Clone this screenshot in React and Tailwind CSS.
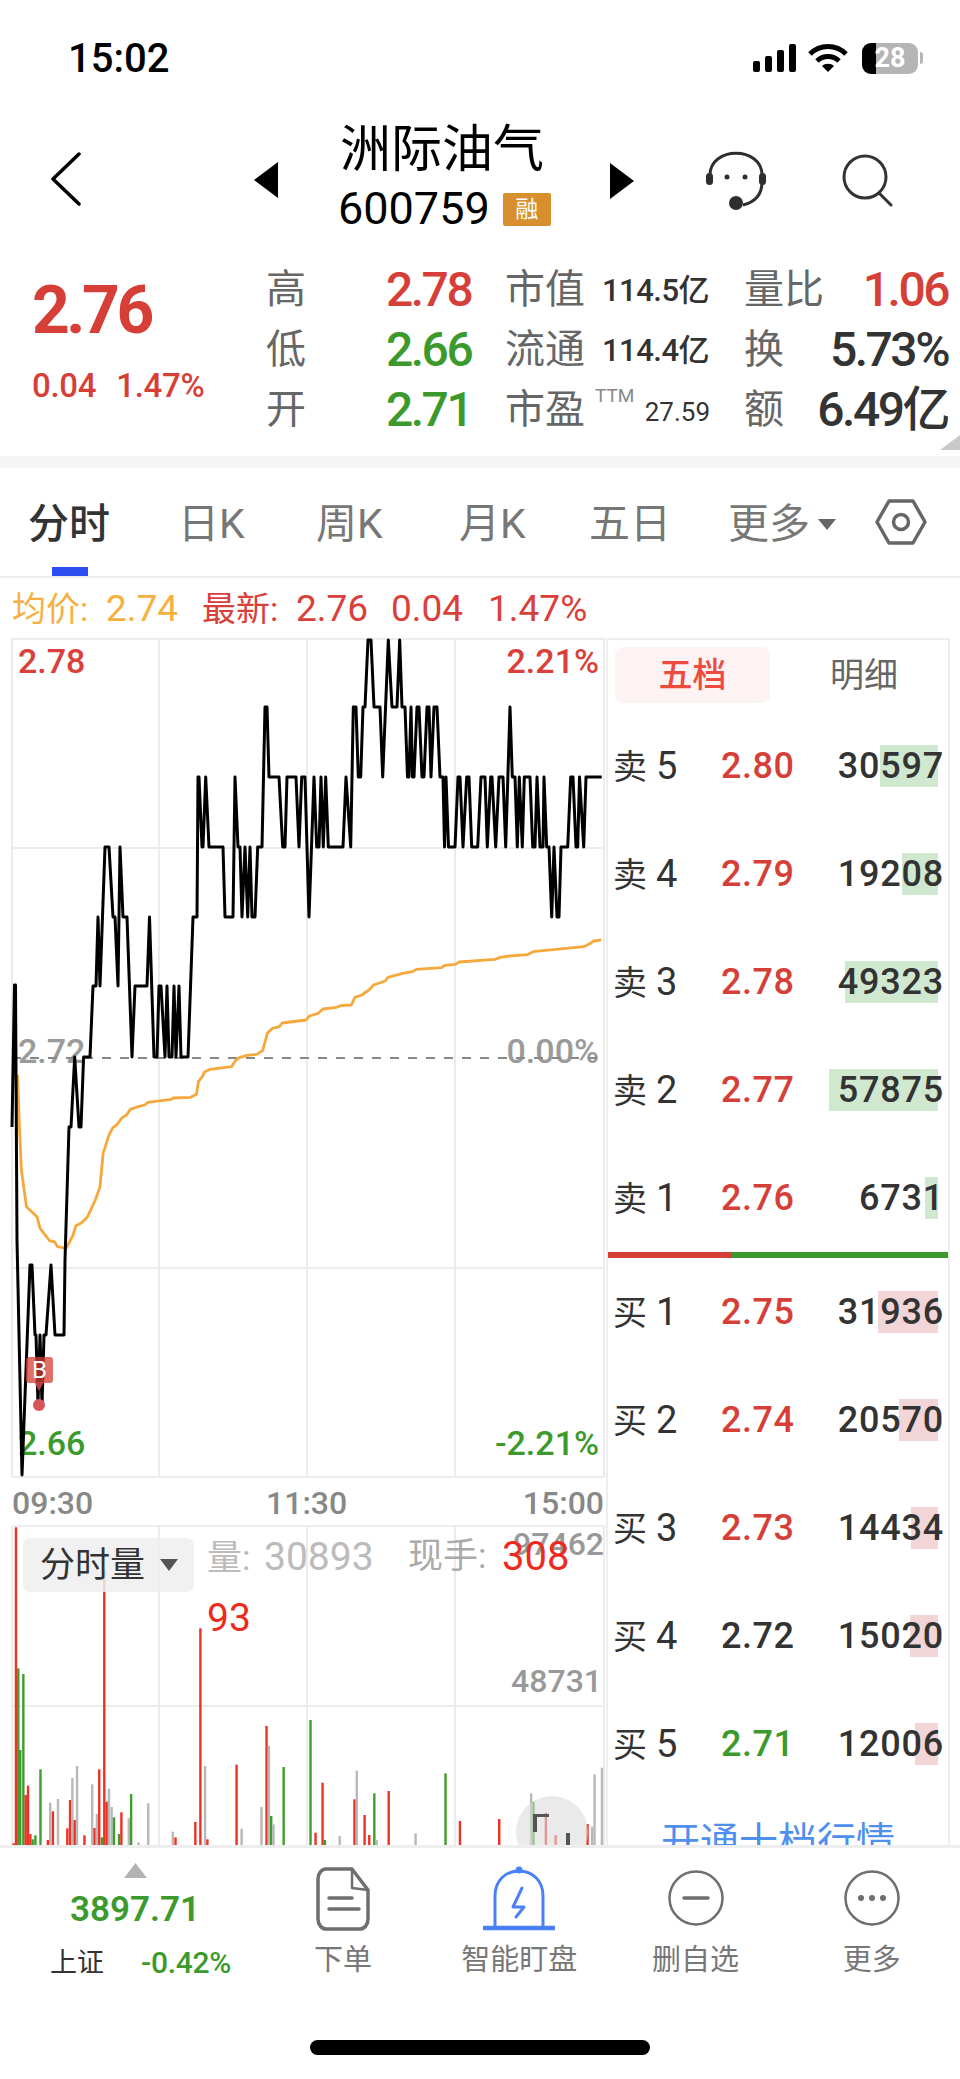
const RED = '#d63f38';
const GREEN = '#3c9a2d';

// price line, page coordinates
const pricePts = [
  [12,1127],[14.5,985],[15.5,985],[17,1240],[22,1475],[30,1265],[32,1265],[35,1335],[36,1335],[38,1405],[40,1335],[42,1405],[44,1335],[46,1335],[51,1265],[55,1335],[64,1335],
  [65,1260],[69,1127],[71,1127],[74.7,1057],[79,1127],[81,1127],[83.6,1057],[90,1057],[93,986],[96,986],[98,917],[100,986],[105,847],[109,847],[113,917],[115,917],[118,986],[120,847],[123,917],[127,917],[132,1057],[135,986],[147,986],[149.5,917],[154,1057],[157,1057],[159,986],[161,986],[165,1057],[167,986],[169,1057],[172,1057],[174,986],[176,1057],[179,986],[181,1057],[188,1057],[193,917],[197,917],
  [198,777],[199,777],[202,847],[203,847],[205.7,777],[209,847],[223,847],[225,917],[233,917],[235,777],[238,847],[240,847],[242,917],[245,847],[247.7,917],[250,847],[252,917],[255,917],[257.7,847],[262,847],[265,707],[267,707],[269,777],[279,777],[282.7,847],[285,847],[287,777],[296,777],[299,847],[301.7,777],[305,777],[309,917],[314,777],[316.7,847],[319,847],[321,777],[323.3,847],[325.7,777],[328.3,847],[343,847],[346,777],[350.7,847],[353.3,707],[356,707],[358.3,777],[360.7,777],[363,707],[365,707],[368,640],[371,640],[374,707],[380,707],[382.7,777],[388.3,640],[392,707],[397,707],
  [399.7,640],[402,707],[405,707],[407.5,777],[409,777],[411,707],[412.5,777],[414,777],[417,707],[419,707],[422,777],[424,777],[427,707],[429,707],[431,777],[434,707],[437,707],[440,777],[443,777],[444.5,847],[446,777],[448.5,847],[455,847],[458,777],[460,777],[463,847],[466.7,777],[469,777],[471.7,847],[477.7,847],[481,777],[485,777],[487.3,847],[490.7,777],[492,777],[495.7,847],[499,777],[503,777],[505.7,847],[510,707],[512.3,777],[515,777],[517.3,847],[519.3,777],[522.3,847],[524.3,777],[530,777],[532.7,847],[535,847],[537,777],[540,847],[543,847],[544,777],[546.7,847],[549,847],[551.7,917],[554,847],[557,917],[559,917],[561,847],[567.7,847],[570.7,777],[573,777],[576,847],[577.7,847],[579.5,777],[583.7,847],[586,777],[601.7,777],
];

// average line and volume bars were read off a crop: x / 2.57, 860 + y / 3
const avgPts = [
  [45,645],[50,800],[55,930],[68,1040],[95,1070],[103,1105],[128,1143],[140,1145],[148,1160],[170,1165],[188,1125],[195,1097],[210,1088],[225,1070],[245,1020],[257,980],[265,880],[280,825],[290,803],[300,795],[312,775],[325,765],[335,748],[355,740],[372,735],[380,727],[440,718],[445,714],[490,712],[505,703],[510,665],[520,650],[525,637],[540,628],[595,620],[605,602],[615,593],[635,586],[660,583],[675,572],[687,520],[700,505],[718,500],[725,489],[787,480],[795,468],[818,460],[830,447],[865,442],[875,437],[903,435],[912,412],[930,405],[950,388],[960,375],[990,363],[997,352],[1035,340],[1060,335],[1070,328],[1135,323],[1143,316],[1170,313],[1180,306],[1272,298],[1285,292],[1310,288],[1355,284],[1370,275],[1500,260],[1518,250],[1525,243],[1545,240],
];

const volBars = [
  ['r',35,1030],['r',41,82],['g',47,505],['g',52,750],['g',60,522],['r',66,885],['r',72,857],['r',78,1002],['g',84,1018],['g',91,1006],['g',104,808],['r',123,1020],['n',129,908],['r',136,934],['n',149,897],['r',173,985],['r',180,900],['n',186,834],['r',192,960],['n',198,798],['r',217,1006],['n',237,853],['r',243,984],['n',249,942],['r',255,808],['g',262,1012],['n',280,866],['n',287,921],['r',274,905],['r',268,208],['g',293,952],['g',306,1002],['r',312,937],['n',331,955],['g',337,882],['n',356,1027],['n',381,910],['n',444,995],['r',451,1012],['r',502,966],['r',515,385],['n',527,798],['r',533,1018],['r',608,794],['n',621,986],['n',672,921],['r',685,678],['n',691,738],['g',697,948],['n',703,973],['g',729,801],['g',798,660],['r',811,998],['r',829,848],['g',835,1020],['n',873,1008],['r',911,898],['n',917,812],['r',937,945],['r',949,1005],['g',962,880],['n',968,1020],['r',999,873],['n',1068,1000],['g',1145,820],['r',1182,963],['r',1283,957],['n',1365,880],['g',1371,905],['r',1403,938],['r',1428,1005],['r',1510,972],['n',1522,980],['n',1528,823],['n',1547,803],
];
const barColor = { r: '#ee3124', g: '#3f9c2e', n: '#b8b8b8' };

const gridX = [12, 159, 307, 455, 604];

const sells = [
  ['5', '2.80', '30597', 880, RED],
  ['4', '2.79', '19208', 902, RED],
  ['3', '2.78', '49323', 845, RED],
  ['2', '2.77', '57875', 829, RED],
  ['1', '2.76', '6731', 925, RED],
];
const buys = [
  ['1', '2.75', '31936', 878, RED],
  ['2', '2.74', '20570', 899, RED],
  ['3', '2.73', '14434', 911, RED],
  ['4', '2.72', '15020', 910, '#333333'],
  ['5', '2.71', '12006', 915, GREEN],
];

const toLine = (pts) => pts.map((p) => p.join(',')).join(' ');

const StatusBar = () => (
  <div className="flex h-[90px] items-start">
    <div className="ml-[68px] mt-[38px] w-[110px] text-[40px] font-medium leading-[42px] text-black">15:02</div>
    <svg className="ml-[574px] mt-[43px]" width="46" height="30" viewBox="0 0 46 30" fill="#000">
      <rect x="1" y="18" width="7" height="11" rx="2" />
      <rect x="13" y="13" width="7" height="16" rx="2" />
      <rect x="25" y="7" width="7" height="22" rx="2" />
      <rect x="37" y="1" width="7" height="28" rx="2" />
    </svg>
    <svg className="ml-[9px] mt-[42px]" width="42" height="32" viewBox="0 0 42 32" fill="none" stroke="#000" strokeWidth="5">
      <path d="M3 12C13 2 29 2 39 12" />
      <path d="M10 19C16 13 26 13 32 19" />
      <path d="M21 30L15 24C18 21 24 21 27 24Z" fill="#000" stroke="none" />
    </svg>
    <div className="relative ml-[13px] mt-[43px] flex h-[31px] w-[56px] items-center justify-center overflow-hidden rounded-[9px] bg-[#b5b5b5]">
      <div className="absolute inset-y-0 left-0 w-[14px] bg-black" />
      <span className="relative text-[27px] font-bold leading-none text-white">28</span>
    </div>
    <div className="ml-[2px] mt-[52px] h-[12px] w-[3px] rounded-r-full bg-[#b5b5b5]" />
  </div>
);

const Header = () => (
  <div className="flex h-[170px] items-start">
    <svg className="ml-[50px] mt-[62px]" width="32" height="54" viewBox="0 0 32 54" fill="none" stroke="#000" strokeWidth="3.5" strokeLinecap="round" strokeLinejoin="round">
      <path d="M29 2L3 27L29 52" />
    </svg>
    <svg className="ml-[172px] mt-[72px]" width="24" height="36" viewBox="0 0 24 36" fill="#000">
      <path d="M24 0V36L0 18Z" />
    </svg>
    <div className="ml-[60px] w-[216px]">
      <div className="ml-[2px] mt-[31px] text-[51px] leading-[58px] text-black">洲际油气</div>
      <div className="mt-[7px] flex items-center">
        <span className="text-[45px] leading-[46px] text-black">600759</span>
        <span className="ml-[13px] flex h-[33px] w-[48px] items-center justify-center rounded-[2px] bg-[#d8902e] text-[23px] leading-none text-white">融</span>
      </div>
    </div>
    <svg className="ml-[56px] mt-[73px]" width="24" height="36" viewBox="0 0 24 36" fill="#000">
      <path d="M0 0V36L24 18Z" />
    </svg>
    <svg className="ml-[71px] mt-[60px]" width="62" height="60" viewBox="0 0 62 60" fill="none" stroke="#2e2e2e" strokeWidth="3">
      <path d="M5 25C5 -4 57 -4 57 25" />
      <path d="M57 32C57 44 50 52 38 55" />
      <rect x="1" y="23" width="7" height="12" rx="3.5" fill="#2e2e2e" stroke="none" />
      <rect x="54" y="23" width="7" height="12" rx="3.5" fill="#2e2e2e" stroke="none" />
      <circle cx="22" cy="27" r="2.5" fill="#2e2e2e" stroke="none" />
      <circle cx="40" cy="27" r="2.5" fill="#2e2e2e" stroke="none" />
      <circle cx="31" cy="53" r="7" fill="#2e2e2e" stroke="none" />
    </svg>
    <svg className="ml-[75px] mt-[63px]" width="52" height="54" viewBox="0 0 52 54" fill="none" stroke="#333" strokeWidth="3" strokeLinecap="round">
      <circle cx="23" cy="24" r="21" />
      <path d="M38 41L49 52" />
    </svg>
  </div>
);

const quoteRows = [
  { k1: '高', v1: '2.78', c1: RED, k2: '市值', v2: '114.5亿', k3: '量比', v3: '1.06', c3: RED },
  { k1: '低', v1: '2.66', c1: GREEN, k2: '流通', v2: '114.4亿', k3: '换', v3: '5.73%', c3: '#333333' },
  { k1: '开', v1: '2.71', c1: GREEN, k2: '市盈', v2: '27.59', ttm: true, k3: '额', v3: '6.49亿', c3: '#333333' },
];

const Quote = () => (
  <div className="relative flex h-[196px] items-start">
    <div className="w-[266px] pl-[32px]">
      <div className="mt-[15px] text-[66px] font-bold leading-[72px] tracking-[-3.5px] text-[#d63f38]">2.76</div>
      <div className="mt-[21px] flex text-[33px] font-medium leading-[36px] tracking-[-0.3px] text-[#d63f38]">
        <span>0.04</span>
        <span className="ml-[20px]">1.47%</span>
      </div>
    </div>
    <div className="w-[682px]">
      {quoteRows.map((r) => (
        <div key={r.k1} className="grid h-[60px] grid-cols-[120px_119px_97px_142px_1fr] items-center">
          <span className="text-[40px] leading-none text-[#666]">{r.k1}</span>
          <span className="text-[48px] font-medium leading-none tracking-[-2.5px]" style={{ color: r.c1 }}>{r.v1}</span>
          <span className="text-[40px] leading-none text-[#666]">{r.k2}</span>
          {r.ttm ? (
            <span className="relative w-[108px] pt-[4px] text-right text-[26px] leading-none text-[#333]">
              <span className="absolute left-[-7px] top-[-9px] text-[19px] text-[#888]">TTM</span>
              {r.v2}
            </span>
          ) : (
            <span className="w-[108px] text-[31px] font-medium leading-none tracking-[-0.5px] text-[#333]">{r.v2}</span>
          )}
          <div className="flex items-center justify-between">
            <span className="text-[40px] leading-none text-[#666]">{r.k3}</span>
            <span className="text-[48px] font-medium leading-none tracking-[-2.5px]" style={{ color: r.c3 }}>{r.v3}</span>
          </div>
        </div>
      ))}
    </div>
    <svg className="absolute bottom-[6px] right-0" width="20" height="15" viewBox="0 0 20 15" fill="#c9c9c9">
      <path d="M20 0V15H0Z" />
    </svg>
  </div>
);

const tabs = ['分时', '日K', '周K', '月K', '五日'];

const Tabs = () => (
  <div className="relative grid h-[110px] grid-cols-[150px_138px_143px_130px_139px_147px_auto] items-center border-b-2 border-[#eeeeee] pl-[28px] pt-[5px]">
    {tabs.map((t, i) => (
      <span key={t} className={i === 0 ? 'text-[41px] font-medium leading-none text-[#333]' : 'text-[41px] leading-none text-[#777]'}>
        {t}
      </span>
    ))}
    <span className="flex items-center text-[41px] leading-none text-[#777]">
      更多
      <svg className="ml-[8px]" width="18" height="11" viewBox="0 0 18 11" fill="#666">
        <path d="M0 0H18L9 11Z" />
      </svg>
    </span>
    <svg className="-mt-[5px]" width="52" height="46" viewBox="0 0 52 46" fill="none" stroke="#666" strokeWidth="3.5" strokeLinejoin="round">
      <path d="M14 2H38L50 23L38 44H14L2 23Z" />
      <circle cx="26" cy="23" r="7.5" />
    </svg>
    <div className="absolute bottom-0 left-[52px] h-[9px] w-[36px] bg-[#2c4ef0]" />
  </div>
);

const InfoLine = () => (
  <div className="flex h-[60px] items-center pl-[12px] text-[37px] leading-none">
    <span className="flex w-[190px] items-baseline text-[#f5b041]">
      <span className="w-[94px] text-[34px]">均价:</span>2.74
    </span>
    <span className="flex w-[189px] items-baseline text-[#d9403a]">
      <span className="w-[94px] text-[34px]">最新:</span>2.76
    </span>
    <span className="w-[97px] text-[#d9403a]">0.04</span>
    <span className="text-[#d9403a]">1.47%</span>
  </div>
);

const Charts = () => (
  <div className="relative h-[1207px] w-[606px] shrink-0 overflow-hidden">
    {/* chart labels sit at fixed spots on the canvas, under the lines */}
    <span className="absolute left-[18px] top-[3px] text-[34px] font-medium leading-[40px] text-[#d9403a]">2.78</span>
    <span className="absolute right-[7px] top-[3px] text-[34px] font-medium leading-[40px] text-[#d9403a]">2.21%</span>
    <span className="absolute left-[18px] top-[393px] text-[34px] font-medium leading-[40px] text-[#9a9a9a]">2.72</span>
    <span className="absolute right-[7px] top-[393px] text-[34px] font-medium leading-[40px] text-[#9a9a9a]">0.00%</span>
    <span className="absolute left-[18px] top-[785px] text-[34px] font-medium leading-[40px] text-[#3c9a2d]">2.66</span>
    <span className="absolute right-[7px] top-[785px] text-[34px] font-medium leading-[40px] text-[#3c9a2d]">-2.21%</span>
    <span className="absolute left-[12px] top-[845px] text-[32px] font-medium leading-[40px] text-[#888]">09:30</span>
    <span className="absolute left-[266px] top-[845px] text-[32px] font-medium leading-[40px] text-[#888]">11:30</span>
    <span className="absolute right-[2px] top-[845px] text-[32px] font-medium leading-[40px] text-[#888]">15:00</span>
    <span className="absolute right-[2px] top-[886px] text-[32px] font-medium leading-[40px] text-[#999]">97462</span>
    <span className="absolute right-[4px] top-[1023px] text-[32px] font-medium leading-[40px] text-[#999]">48731</span>

    <svg className="absolute inset-0" width="606" height="1207" viewBox="0 638 606 1207" fill="none">
      {gridX.map((x) => (
        <g key={x} stroke="#ececec" strokeWidth="2">
          <line x1={x} y1="638" x2={x} y2="1477" />
          <line x1={x} y1="1526" x2={x} y2="1845" />
        </g>
      ))}
      {[639, 848, 1268, 1477, 1526, 1706].map((y) => (
        <line key={y} x1="12" y1={y} x2="604" y2={y} stroke="#ececec" strokeWidth="2" />
      ))}
      <line x1="12" y1="1058" x2="604" y2="1058" stroke="#888" strokeWidth="2" strokeDasharray="9 9" />
      <polyline points={toLine(avgPts.map(([x, y]) => [x / 2.57, 860 + y / 3]))} stroke="#f5a83c" strokeWidth="2.8" strokeLinejoin="round" />
      <polyline points={toLine(pricePts)} stroke="#000" strokeWidth="3" strokeLinejoin="round" />
      {volBars.map(([c, x, t]) => (
        <rect key={`${c}${x}`} x={x / 2.57 - 1.2} y={1500 + t / 3} width="2.4" height={1845 - 1500 - t / 3} fill={barColor[c]} />
      ))}
      <circle cx="39" cy="1405" r="6" fill="#d9535a" />
      <path d="M34 1382H44L39 1391Z" fill="#d9535a" fillOpacity="0.8" />
    </svg>

    <div className="absolute left-[26px] top-[719px] flex h-[26px] w-[27px] items-center justify-center rounded-[3px] bg-[#d63f38]/75 text-[24px] leading-none text-white">B</div>

    <div className="absolute left-[23px] top-[900px] flex h-[54px] w-[171px] items-center rounded-[7px] bg-[#efefef]/85 pl-[17px] text-[35px] leading-none text-[#333]">
      分时量
      <svg className="ml-[15px]" width="18" height="12" viewBox="0 0 18 12" fill="#555">
        <path d="M0 0H18L9 12Z" />
      </svg>
    </div>
    <div className="absolute left-[207px] top-[899px] flex items-baseline text-[39px] leading-[40px] text-[#bbb]">
      <span className="w-[57px] text-[35px]">量:</span>30893
    </div>
    <div className="absolute left-[408px] top-[899px] text-[35px] leading-[40px] text-[#aaa]">现手:</div>
    <div className="absolute left-[502px] top-[899px] text-[40px] leading-[40px] text-[#ee2a1e]">308</div>
    <div className="absolute left-[207px] top-[960px] text-[39px] leading-[40px] text-[#ee2a1e]">93</div>

    <div className="absolute left-[516px] top-[1158px] h-[72px] w-[72px] rounded-full bg-[#dcdcdc]/60" />
    <svg className="absolute left-[530px] top-[1174px]" width="42" height="34" viewBox="0 0 42 34" fill="#555">
      <path d="M3 2H19V5H7V20H3Z" />
      <rect x="36" y="21" width="4" height="13" />
    </svg>
  </div>
);

const BookRow = ({ side, row, bg }) => {
  const [n, price, vol, barLeft, color] = row;
  return (
    <div className="relative flex h-[108px] items-center pl-[5px]">
      <div className={`absolute right-[10px] top-[33px] h-[42px] ${bg}`} style={{ width: 938 - barLeft }} />
      <span className="relative w-[108px] text-[34px] leading-none text-[#333]">
        {side}
        <span className="ml-[9px] text-[38px]">{n}</span>
      </span>
      <span className="relative w-[90px] text-[36px] font-medium leading-none tracking-[0.5px]" style={{ color }}>{price}</span>
      <span className="relative w-[133px] text-right text-[36px] font-medium leading-none tracking-[0.8px] text-[#333]">{vol}</span>
    </div>
  );
};

const OrderBook = () => (
  <div className="h-[1207px] w-[344px] shrink-0 overflow-hidden border-x-2 border-t-2 border-[#eeeeee]">
    <div className="flex h-[72px] pl-[7px] pt-[7px]">
      <div className="flex h-[56px] w-[155px] items-center justify-center rounded-[8px] bg-[#fdf3f3] text-[34px] font-medium leading-none text-[#ee4b3f]">五档</div>
      <div className="ml-[14px] flex h-[56px] w-[160px] items-center justify-center text-[34px] leading-none text-[#666]">明细</div>
    </div>
    {sells.map((r) => (
      <BookRow key={r[0]} side="卖" row={r} bg="bg-[#d0e8cf]" />
    ))}
    <div className="flex h-[6px]">
      <div className="w-[124px] bg-[#d63f38]" />
      <div className="flex-1 bg-[#3c9a2d]" />
    </div>
    {buys.map((r) => (
      <BookRow key={r[0]} side="买" row={r} bg="bg-[#f2d6d7]" />
    ))}
    <div className="mt-[21px] text-center text-[39px] leading-[46px] text-[#4f8fee]">开通十档行情</div>
  </div>
);

const navItems = [
  {
    label: '下单',
    tall: true,
    icon: (
      <svg width="54" height="64" viewBox="0 0 54 64" fill="none" stroke="#6e6e6e" strokeWidth="3.5" strokeLinejoin="round">
        <path d="M10 2H36L52 23V52C52 58 48 62 44 62H10C6 62 2 58 2 52V12C2 6 6 2 10 2Z" />
        <path d="M36 2V21L52 23" strokeWidth="2.5" />
        <path d="M13 31H36M13 42H43" strokeLinecap="round" />
      </svg>
    ),
  },
  {
    label: '智能盯盘',
    tall: true,
    icon: (
      <svg width="72" height="66" viewBox="0 0 72 66" fill="none" stroke="#4a80f5" strokeWidth="3">
        <path d="M12 62V30C12 14 23 5 36 5C49 5 60 14 60 30V62" />
        <circle cx="36" cy="4" r="3.5" fill="#4a80f5" stroke="none" />
        <path d="M0 62H72" strokeWidth="4.5" />
        <path d="M39 22L30 41H41L33 51" strokeLinejoin="round" strokeLinecap="round" />
      </svg>
    ),
  },
  {
    label: '删自选',
    icon: (
      <svg width="56" height="56" viewBox="0 0 56 56" fill="none" stroke="#6e6e6e" strokeWidth="2.5">
        <circle cx="28" cy="28" r="26.5" />
        <path d="M16 28H40" strokeWidth="3.5" strokeLinecap="round" />
      </svg>
    ),
  },
  {
    label: '更多',
    icon: (
      <svg width="56" height="56" viewBox="0 0 56 56" fill="none" stroke="#6e6e6e" strokeWidth="2.5">
        <circle cx="28" cy="28" r="26.5" />
        <g fill="#6e6e6e" stroke="none">
          <circle cx="17" cy="28" r="3" />
          <circle cx="28" cy="28" r="3" />
          <circle cx="39" cy="28" r="3" />
        </g>
      </svg>
    ),
  },
];

const BottomNav = () => (
  <div className="relative h-[234px] border-t-[3px] border-[#eeeeee] bg-white">
    <div className="flex h-[136px] items-start">
      <div className="flex h-full w-[255px] shrink-0 flex-col pl-[50px]">
        <svg className="ml-[74px] mt-[15px]" width="23" height="15" viewBox="0 0 23 15" fill="#b3b3b3">
          <path d="M11.5 0L23 15H0Z" />
        </svg>
        <div className="ml-[20px] mt-[10px] text-[35px] font-semibold leading-[44px] text-[#3c9a2d]">3897.71</div>
        <div className="mt-[16px] flex items-center leading-none">
          <span className="text-[27px] text-[#333]">上证</span>
          <span className="ml-[37px] text-[30px] font-medium tracking-[-0.3px] text-[#3c9a2d]">-0.42%</span>
        </div>
      </div>
      <div className="grid flex-1 grid-cols-4">
        {navItems.map((item) => (
          <div key={item.label} className={`flex h-[136px] flex-col items-center ${item.tall ? 'pt-[18px]' : 'pt-[22px]'}`}>
            <div className={item.tall ? 'flex h-[66px] items-center' : 'flex h-[56px] items-center'}>{item.icon}</div>
            <span className={`${item.tall ? 'mt-[10px]' : 'mt-[16px]'} text-[29px] leading-[36px] text-[#777]`}>{item.label}</span>
          </div>
        ))}
      </div>
    </div>
    <div className="ml-[310px] mt-[56px] h-[15px] w-[340px] rounded-full bg-black" />
  </div>
);

export default function App() {
  return (
    <div className="h-[2079px] w-[960px] overflow-hidden bg-white font-['Roboto','Noto_Sans_CJK_SC',sans-serif]">
      <StatusBar />
      <Header />
      <Quote />
      <div className="h-[12px] bg-[#f5f5f5]" />
      <Tabs />
      <InfoLine />
      <div className="flex">
        <Charts />
        <OrderBook />
      </div>
      <BottomNav />
    </div>
  );
}
